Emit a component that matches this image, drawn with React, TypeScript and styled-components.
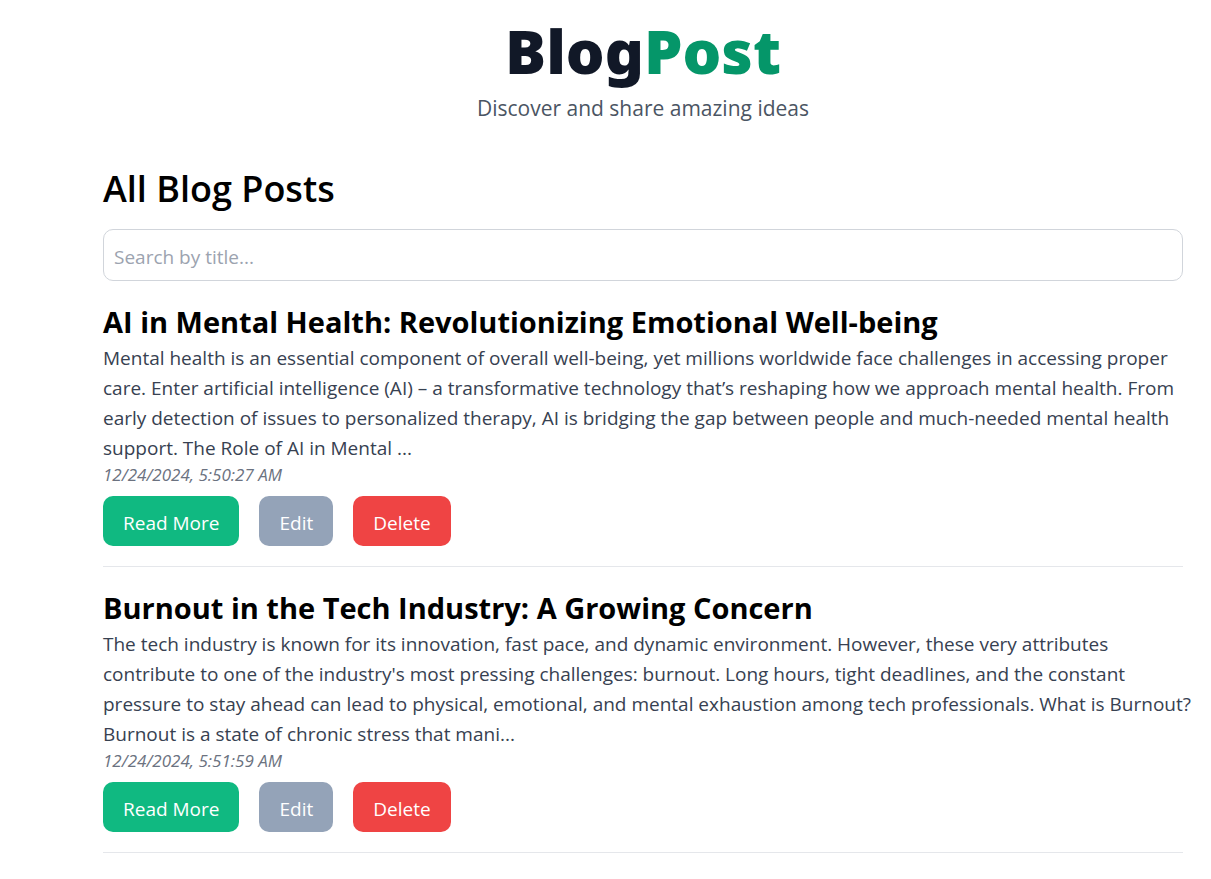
import React, { useState } from "react";
import styled, { createGlobalStyle } from "styled-components";

const GlobalStyle = createGlobalStyle`
  *, *::before, *::after { box-sizing: border-box; }
  body {
    margin: 0;
    background: #fff;
    color: #000;
    font-family: "Segoe UI", "Open Sans", "Noto Sans", sans-serif;
    font-size: 19px;
    line-height: 30px;
  }
  h1, h2, h3, p { margin: 0; }
`;

const Page = styled.div`
  padding: 21px 28px 20px 103px;
`;

const Header = styled.header`
  margin-bottom: 40px;
  text-align: center;
`;

const Brand = styled.h1`
  font-family: "Segoe UI", "Noto Sans", sans-serif;
  font-size: 61px;
  font-weight: 900;
  line-height: 60px;
  color: #111827;
`;

const BrandAccent = styled.span`
  color: #059669;
`;

const Tagline = styled.p`
  padding-top: 10px;
  font-size: 21px;
  line-height: 35px;
  color: #4b5563;
`;

const SectionTitle = styled.h2`
  margin-bottom: 18px;
  font-size: 36px;
  font-weight: 600;
  line-height: 45px;
`;

const SearchInput = styled.input`
  display: block;
  width: 100%;
  height: 52px;
  margin-bottom: 20px;
  padding: 4px 10px 0;
  border: 1px solid #d1d5db;
  border-radius: 10px;
  background: #fff;
  color: inherit;
  font: inherit;

  &::placeholder {
    color: #9ca3af;
    opacity: 1;
  }
`;

const Post = styled.article`
  margin-bottom: 20px;
  padding-bottom: 20px;
  border-bottom: 1px solid #e5e7eb;
`;

const PostTitle = styled.h3`
  font-size: 29px;
  font-weight: 700;
  line-height: 42px;
`;

const Excerpt = styled.p`
  margin-right: -10px;
  color: #374151;
`;

const PostDate = styled.time`
  display: block;
  font-size: 17px;
  font-style: italic;
  line-height: 23px;
  color: #6b7280;
`;

const Actions = styled.div`
  display: flex;
  gap: 20px;
  margin-top: 10px;
`;

const ActionButton = styled.button<{ $color: string }>`
  height: 50px;
  padding: 4px 20px 0;
  border: 0;
  border-radius: 10px;
  background: ${(p) => p.$color};
  color: #fff;
  font: inherit;
  cursor: pointer;
`;

const posts = [
  {
    title: "AI in Mental Health: Revolutionizing Emotional Well-being",
    excerpt:
      "Mental health is an essential component of overall well-being, yet millions worldwide face challenges in accessing proper care. Enter artificial intelligence (AI) – a transformative technology that’s reshaping how we approach mental health. From early detection of issues to personalized therapy, AI is bridging the gap between people and much-needed mental health support. The Role of AI in Mental ...",
    iso: "2024-12-24T05:50:27",
    date: "12/24/2024, 5:50:27 AM",
  },
  {
    title: "Burnout in the Tech Industry: A Growing Concern",
    excerpt:
      "The tech industry is known for its innovation, fast pace, and dynamic environment. However, these very attributes contribute to one of the industry's most pressing challenges: burnout. Long hours, tight deadlines, and the constant pressure to stay ahead can lead to physical, emotional, and mental exhaustion among tech professionals. What is Burnout? Burnout is a state of chronic stress that mani...",
    iso: "2024-12-24T05:51:59",
    date: "12/24/2024, 5:51:59 AM",
  },
];

export default function App() {
  const [query, setQuery] = useState("");
  const visible = posts.filter((p) => p.title.toLowerCase().includes(query.toLowerCase()));

  return (
    <>
      <GlobalStyle />
      <Page>
        <Header>
          <Brand>
            Blog<BrandAccent>Post</BrandAccent>
          </Brand>
          <Tagline>Discover and share amazing ideas</Tagline>
        </Header>
        <main>
          <SectionTitle>All Blog Posts</SectionTitle>
          <SearchInput
            type="text"
            aria-label="Search by title"
            placeholder="Search by title..."
            value={query}
            onChange={(e) => setQuery(e.target.value)}
          />
          {visible.map((post) => (
            <Post key={post.iso}>
              <PostTitle>{post.title}</PostTitle>
              <Excerpt>{post.excerpt}</Excerpt>
              <PostDate dateTime={post.iso}>{post.date}</PostDate>
              <Actions>
                <ActionButton type="button" $color="#10b981">Read More</ActionButton>
                <ActionButton type="button" $color="#94a3b8">Edit</ActionButton>
                <ActionButton type="button" $color="#ef4444">Delete</ActionButton>
              </Actions>
            </Post>
          ))}
        </main>
      </Page>
    </>
  );
}
